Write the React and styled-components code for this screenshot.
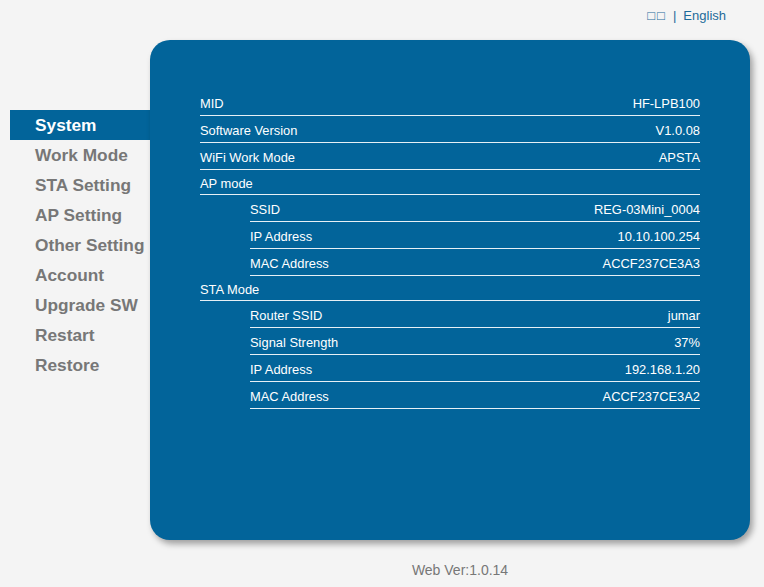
import React from 'react'
import styled, { createGlobalStyle } from 'styled-components'

const GlobalStyle = createGlobalStyle`
  html, body {
    margin: 0;
    padding: 0;
    background: #f4f4f4;
    font-family: "Liberation Sans", Arial, sans-serif;
  }
`

const Page = styled.div`
  width: 764px;
  height: 587px;
  position: relative;
  overflow: hidden;
`

const TopBar = styled.div`
  height: 30px;
  display: flex;
  justify-content: flex-end;
  align-items: center;
  padding-right: 38px;
  font-size: 13px;
  color: #1c6a9a;
  box-sizing: border-box;
`

const Lang = styled.span`
  letter-spacing: ${props => props.spaced ? '2px' : '0'};
`

const Sep = styled.span`
  margin: 0 7px 0 6px;
`

const Body = styled.div`
  display: flex;
  align-items: flex-start;
  margin-top: 10px;
`

const Nav = styled.ul`
  list-style: none;
  margin: 70px 0 0 10px;
  padding: 0;
  width: 140px;
`

const NavItem = styled.li`
  height: 30px;
  line-height: 30px;
  padding-left: 25px;
  font-size: 17.3px;
  font-weight: bold;
  color: ${props => props.active ? '#fff' : '#777'};
  background: ${props => props.active ? '#02649a' : 'transparent'};
  white-space: nowrap;
`

const Panel = styled.div`
  width: 600px;
  height: 500px;
  box-sizing: border-box;
  background: #02649a;
  border-radius: 20px;
  box-shadow: 3px 4px 6px rgba(0, 0, 0, 0.35);
  padding: 49px 50px 0 50px;
`

const Table = styled.div`
  display: flex;
  flex-direction: column;
`

const Row = styled.div`
  display: flex;
  justify-content: space-between;
  align-items: center;
  height: ${props => props.short ? 25 : 27}px;
  box-sizing: border-box;
  margin-left: ${props => props.indent ? 50 : 0}px;
  border-bottom: 1.5px solid #e6f0f6;
  color: #fff;
  font-size: 12.9px;
  padding-top: 2px;
`

const Footer = styled.div`
  text-align: center;
  margin-top: 22px;
  padding-left: 156px;
  font-size: 14px;
  color: #777;
`

const nav = ['System', 'Work Mode', 'STA Setting', 'AP Setting', 'Other Setting', 'Account', 'Upgrade SW', 'Restart', 'Restore']

const rows = [
  ['MID', 'HF-LPB100'],
  ['Software Version', 'V1.0.08'],
  ['WiFi Work Mode', 'APSTA'],
  ['AP mode', '', false, true],
  ['SSID', 'REG-03Mini_0004', true],
  ['IP Address', '10.10.100.254', true],
  ['MAC Address', 'ACCF237CE3A3', true],
  ['STA Mode', '', false, true],
  ['Router SSID', 'jumar', true],
  ['Signal Strength', '37%', true],
  ['IP Address', '192.168.1.20', true],
  ['MAC Address', 'ACCF237CE3A2', true],
]

export default function App() {
  return (
    <Page>
      <GlobalStyle />
      <TopBar>
        <Lang spaced>□□</Lang>
        <Sep>|</Sep>
        <Lang>English</Lang>
      </TopBar>
      <Body>
        <Nav>
          {nav.map((n, i) => (
            <NavItem key={n} active={i === 0}>{n}</NavItem>
          ))}
        </Nav>
        <Panel>
          <Table>
            {rows.map(([k, v, indent, short], i) => (
              <Row key={i} indent={indent} short={short}>
                <span>{k}</span>
                <span>{v}</span>
              </Row>
            ))}
          </Table>
        </Panel>
      </Body>
      <Footer>Web Ver:1.0.14</Footer>
    </Page>
  )
}
